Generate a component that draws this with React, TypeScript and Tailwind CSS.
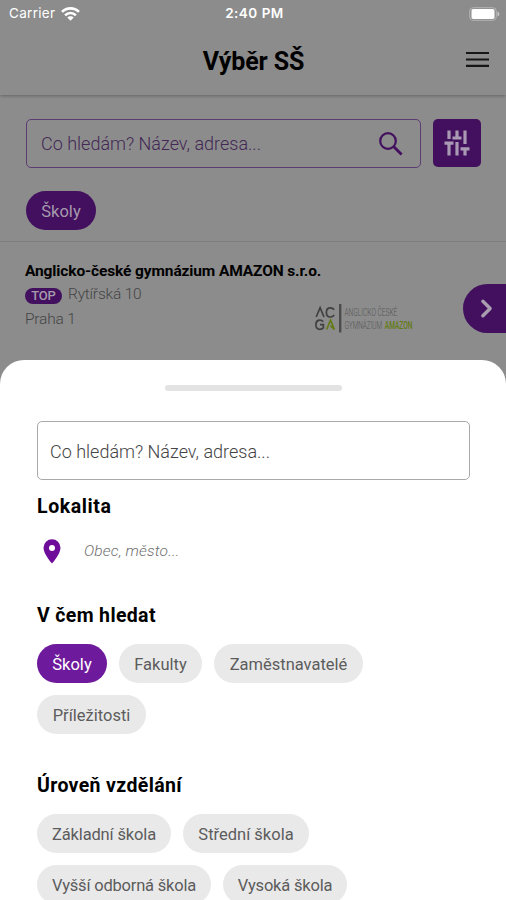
import { ChevronRight } from "lucide-react";

function Chip({ label, size, active = false }: { label: string; size: string; active?: boolean }) {
  const tone = active ? "bg-[#6e1a9c] text-white" : "bg-[#e9e9e9] text-[#5c5c5c]";
  return (
    <button className={`flex h-[39px] shrink-0 items-center justify-center rounded-full pt-[3px] text-[16.5px] whitespace-nowrap ${size} ${tone}`}>
      {label}
    </button>
  );
}

function StatusBar() {
  return (
    <div className="grid h-[27px] grid-cols-3 items-center pr-[6px] pl-[9px] font-['Inter'] text-[13.5px] text-white">
      <div className="flex items-center gap-[6px]">
        <span className="tracking-[0.3px]">Carrier</span>
        <svg width="19" height="14" viewBox="0 0 19 14" fill="none" stroke="white" strokeWidth="2.6">
          <path d="M1 4.9C5.700.2 13.300.2 18 4.900" />
          <path d="M4.1 8.300c3-3 7.800-3 10.800 0" />
          <path d="M9.500 13.700 6.300 10.500c1.700-1.700 4.700-1.700 6.400 0Z" fill="white" stroke="none" />
        </svg>
      </div>
      <span className="text-center font-semibold tracking-[0.5px] whitespace-nowrap">2:40 PM</span>
      <svg className="justify-self-end" width="31" height="14" viewBox="0 0 31 14">
        <rect x=".7" y=".7" width="26.6" height="12.6" rx="3.5" fill="none" stroke="#b5b5b5" />
        <rect x="2.5" y="2" width="23" height="10" rx="1.8" fill="white" />
        <path d="M28.5 4.5c2.4.7 2.4 4.3 0 5Z" fill="#c9c9c9" />
      </svg>
    </div>
  );
}

function SchoolLogo() {
  return (
    <svg className="h-[30px] w-[100px]" viewBox="0 0 100 30" fontFamily="Roboto, sans-serif">
      <g fill="none" stroke="#404040" strokeWidth="1.7">
        <path d="m1.2 13 3.9-9.3L9 13" />
        <path d="M19.2 5.8c-1-1.5-2.3-2-3.8-2-2.4 0-4 1.9-4 4.6s1.6 4.6 4 4.6c1.5 0 2.8-.6 3.8-2" />
        <path d="M8.3 17.6c-1-1-2-1.5-3.400-1.500-2.400 0-4 1.900-4 4.600s1.600 4.600 4 4.600c1.400 0 2.500-.4 3.500-1.400v-3.200H5" />
        <path d="m11.600 25.500 3.900-9.300 3.900 9.300-3.900-3.600" stroke="#637b14" />
        <path d="M25.2 0v28.500" strokeWidth="2.4" stroke="#4c4c4c" />
      </g>
      <g transform="translate(29.5 0) scale(.66 1)" fontSize="11" fill="#555">
        <text y="12.500" fontWeight="300" textLength="80" lengthAdjust="spacingAndGlyphs">ANGLICKO ČESKÉ</text>
        <text y="25.200" fontWeight="300" textLength="57" lengthAdjust="spacingAndGlyphs">GYMNÁZIUM</text>
        <text x="61" y="25.200" fontWeight="500" fill="#637b14" textLength="42" lengthAdjust="spacingAndGlyphs">AMAZON</text>
      </g>
    </svg>
  );
}

function SchoolPage() {
  return (
    <div className="flex h-full flex-col bg-[#8c8c8c]">
      <header className="h-[95px] shrink-0 shadow-[0_1px_3px_rgba(0,0,0,0.28)]">
        <StatusBar />
        <div className="grid h-[68px] grid-cols-[1fr_auto_1fr] items-center pr-[17px] pl-4">
          <span />
          <h1 className="pt-[2px] pl-[2px] text-[25px] font-bold tracking-[-0.1px] text-black">Výběr SŠ</h1>
          <svg className="relative -top-[2px] justify-self-end" width="23" height="17" viewBox="0 0 23 17" stroke="#161616" strokeWidth="2.2">
            <path d="M0 2h23M0 8.500h23M0 14.800h23" />
          </svg>
        </div>
      </header>

      <div className="flex shrink-0 gap-3 pt-[24px] pr-[25px] pl-[26px]">
        <div className="flex h-[49px] w-[395px] items-center justify-between rounded-[5px] border-[1.5px] border-[#5d3b73] pr-[17px] pl-[14px]">
          <span className="text-[18px] font-light text-[#432855]">Co hledám? Název, adresa...</span>
          <svg width="24" height="24" viewBox="0 0 24 24" fill="none" stroke="#42105e">
            <circle cx="9" cy="9" r="7.8" strokeWidth="2.2" />
            <path d="m14.8 14.8 7.8 7.8" strokeWidth="2.8" />
          </svg>
        </div>
        <button className="flex size-[48px] items-center justify-center rounded-[5px] bg-[#42105e]">
          <svg width="26" height="26" viewBox="0 0 26 26" fill="none" stroke="#aa99b4" strokeWidth="3.2">
            <path d="M5 .5v8.500M.5 13.200h9M5 12v13.500M13 .5v8M8.500 8h9M13 12v13.500M21 .5v13.500M16.500 18.800h9M21 18v7.500" />
          </svg>
        </button>
      </div>
      <div className="flex h-[74px] shrink-0 items-start border-b border-[#7e7e7e] px-[26px] pt-[23px]">
        <span className="flex h-[39px] w-[70px] items-center justify-center rounded-full bg-[#42105e] pt-[3px] text-[16.500px] text-[#a69aad]">Školy</span>
      </div>

      <article className="flex pt-[18px] pl-[25px]">
        <div className="w-[290px] shrink-0">
          <h2 className="text-[15.5px] leading-[22px] font-bold tracking-[-0.12px] whitespace-nowrap text-black">Anglicko-české gymnázium AMAZON s.r.o.</h2>
          <div className="mt-[1px] flex h-[24px] items-center gap-[6px] text-[15.5px] font-light tracking-[-0.2px] text-[#454545]">
            <span className="mt-[2px] flex h-[16px] w-[37px] items-center justify-center rounded-full bg-[#42105e] text-[13px] font-medium text-[#a69aad]">TOP</span>
            Rytířská 10
          </div>
          <div className="text-[15.5px] leading-[25px] font-light tracking-[-0.2px] text-[#454545]">Praha 1</div>
        </div>
        <div className="mt-[44px] shrink-0">
          <SchoolLogo />
        </div>
        <button className="mt-[24px] ml-auto flex h-[49px] w-[43px] shrink-0 items-center rounded-l-full bg-[#42105e] pl-[9px]">
          <ChevronRight size={29} strokeWidth={2.8} color="#a99db0" />
        </button>
      </article>
    </div>
  );
}

function FilterSheet() {
  return (
    <section className="absolute inset-x-0 top-[360px] bottom-0 overflow-hidden rounded-t-[24px] bg-white px-[37px] pt-[25px]">
      <div className="mx-auto h-[6px] w-[177px] rounded-full bg-[#e3e3e3]" />
      <div className="mt-[30px] flex h-[59px] w-[433px] items-center rounded-[5px] border-[1.5px] border-[#a9a9a9] pt-[1px] pl-[12px] text-[18px] font-light text-[#444]">
        Co hledám? Název, adresa...
      </div>

      <h3 className="mt-[12px] text-[19.5px] leading-[30px] font-bold tracking-[0.6px] text-black">Lokalita</h3>
      <div className="mt-[14px] flex h-[30px] items-center pl-[6px]">
        <svg width="18" height="25" viewBox="0 0 18 25" fill="#6e0d99">
          <path fillRule="evenodd" d="M9 .3A8.500 8.500 0 0 0 .5 8.800C.5 15.300 9 24.500 9 24.500s8.500-9.200 8.500-15.700A8.500 8.500 0 0 0 9 .3Zm0 5.600a3 3 0 1 1 0 6 3 3 0 0 1 0-6Z" />
        </svg>
        <span className="ml-[23px] pt-[1px] text-[15.5px] font-light tracking-[0.15px] text-[#707070] italic">Obec, město...</span>
      </div>

      <h3 className="mt-[35px] text-[19.5px] leading-[30px] font-bold tracking-[0.35px] text-black">V čem hledat</h3>
      <div className="mt-[13px] flex flex-wrap gap-3">
        <Chip label="Školy" size="w-[70px]" active />
        <Chip label="Fakulty" size="w-[83px]" />
        <Chip label="Zaměstnavatelé" size="w-[149px]" />
        <Chip label="Příležitosti" size="w-[109px]" />
      </div>

      <h3 className="mt-[37px] text-[19.5px] leading-[30px] font-bold tracking-[0.35px] whitespace-nowrap text-black">Úroveň vzdělání</h3>
      <div className="mt-[13px] flex flex-wrap gap-3">
        <Chip label="Základní škola" size="w-[134px] tracking-[-0.15px]" />
        <Chip label="Střední škola" size="w-[126px]" />
        <Chip label="Vyšší odborná škola" size="w-[174px] tracking-[-0.2px]" />
        <Chip label="Vysoká škola" size="w-[124px] tracking-[-0.2px]" />
      </div>
    </section>
  );
}

export default function App() {
  return (
    <main className="relative h-[900px] w-full overflow-hidden font-['Roboto',sans-serif]">
      <SchoolPage />
      <FilterSheet />
    </main>
  );
}
